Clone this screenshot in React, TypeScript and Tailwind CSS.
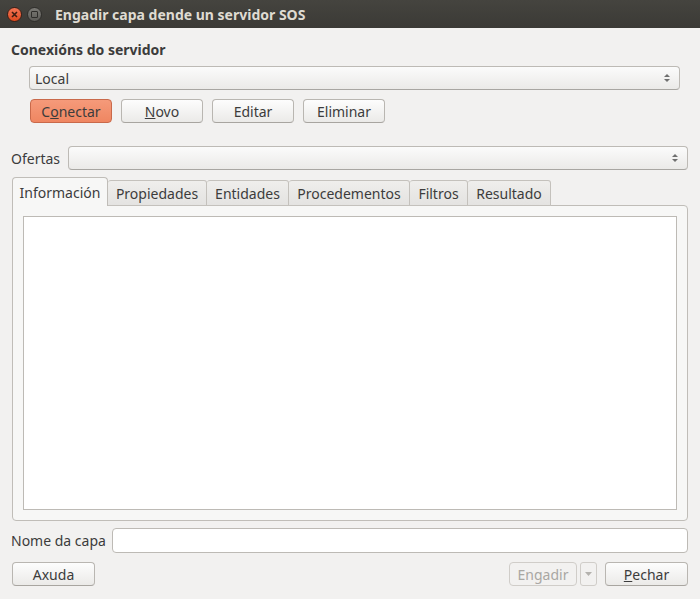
import React from "react";

const font = { fontFamily: '"Noto Sans", "Open Sans", sans-serif' };

function Spin() {
  return (
    <svg width="8" height="12" viewBox="0 0 8 12" className="shrink-0">
      <path d="M4 2 L7 5 L1 5 Z" fill="#6f6f6f" />
      <path d="M1 7 L7 7 L4 10 Z" fill="#6f6f6f" />
    </svg>
  );
}

function Combo({ text, className = "" }: { text?: string; className?: string }) {
  return (
    <div
      className={`h-6 flex items-center justify-between pl-[5px] pr-[8px] rounded-[4px] border border-[#bdbab5] border-b-[#a8a6a2] bg-gradient-to-b from-[#fbfbfb] to-[#ebeae8] text-[#3c3c3c] ${className}`}
    >
      <span>{text}</span>
      <Spin />
    </div>
  );
}

function Btn({
  children,
  className = "w-[82px]",
  tone = "normal",
}: {
  children: React.ReactNode;
  className?: string;
  tone?: "normal" | "accent" | "disabled";
}) {
  const look =
    tone === "accent"
      ? "border-[#c9694a] bg-gradient-to-b from-[#f59a7a] to-[#ef8661] text-[#3c3c3c]"
      : tone === "disabled"
        ? "border-[#d0cdc9] bg-[#f2f1f0] text-[#a9a7a3]"
        : "border-[#b9b6b1] border-b-[#a8a5a0] bg-gradient-to-b from-[#fdfdfd] to-[#ebeae8] text-[#3c3c3c]";
  return (
    <div
      className={`h-6 flex items-center justify-center rounded-[4px] border ${look} ${className}`}
    >
      {children}
    </div>
  );
}

const tabs: [string, string][] = [
  ["Propiedades", "w-[99px]"],
  ["Entidades", "w-[82px]"],
  ["Procedementos", "w-[121px]"],
  ["Filtros", "w-[58px]"],
  ["Resultado", "w-[83px]"],
];

export default function App() {
  return (
    <div
      className="w-[700px] h-[599px] bg-[#f2f1f0] text-[14px] text-[#3c3c3c] flex flex-col overflow-hidden"
      style={font}
    >
      {/* barra de título */}
      <div className="h-[28px] shrink-0 flex items-center bg-gradient-to-b from-[#45443f] to-[#3b3a36] pl-[7px]">
        <div className="w-[15px] h-[15px] rounded-full bg-gradient-to-b from-[#f37453] to-[#df4a1c] border border-[#3b1f17] flex items-center justify-center">
          <svg width="7" height="7" viewBox="0 0 7 7">
            <path d="M1 1 L6 6 M6 1 L1 6" stroke="#3d1d12" strokeWidth="1.6" />
          </svg>
        </div>
        <div className="ml-[5px] w-[15px] h-[15px] rounded-full bg-gradient-to-b from-[#7b7a75] to-[#5c5b57] border border-[#2f2e2b] flex items-center justify-center">
          <div className="w-[7px] h-[7px] border-[1.5px] border-[#2f2e2b] rounded-[1px]" />
        </div>
        <div className="ml-[13px] text-[#dfdbd2] font-bold text-[14px]">
          Engadir capa dende un servidor SOS
        </div>
      </div>

      <div className="flex-1 flex flex-col pl-[11px] pr-[12px] pt-[12px]">
        <div className="font-bold leading-[20px]">Conexións do servidor</div>
        <div className="pl-[18px] pr-[8px] mt-[6px]">
          <Combo text="Local" />
          <div className="flex gap-[9px] mt-[9px] pl-[1px]">
            <Btn tone="accent">
              C<span className="underline">o</span>nectar
            </Btn>
            <Btn>
              <span className="underline">N</span>ovo
            </Btn>
            <Btn>Editar</Btn>
            <Btn>Eliminar</Btn>
          </div>
        </div>

        <div className="flex items-center mt-[23px] gap-[8px]">
          <span>Ofertas</span>
          <Combo className="flex-1" />
        </div>

        {/* pestanas */}
        <div className="mt-[7px] ml-[1px] flex items-end h-[29px] relative z-10">
          <div className="h-[29px] w-[96px] flex items-center justify-center rounded-t-[4px] border border-b-0 border-[#c0bdb8] bg-[#f7f7f6] text-[#3c3c3c]">
            Información
          </div>
          {tabs.map(([t, w]) => (
            <div
              key={t}
              className={`h-[26px] ${w} flex items-center justify-center rounded-t-[3px] border border-l-0 border-[#c4c1bc] bg-gradient-to-b from-[#efeeec] to-[#e4e3e1]`}
            >
              {t}
            </div>
          ))}
        </div>
        <div className="ml-[1px] -mt-[1px] h-[316px] rounded-b-[4px] rounded-tr-[4px] border border-[#c0bdb8] bg-[#f7f7f6] p-[10px]">
          <div className="h-full border border-[#bdbab5] bg-white" />
        </div>

        <div className="flex items-center mt-[7px] gap-[6px]">
          <span>Nome da capa</span>
          <div className="flex-1 h-[25px] rounded-[4px] border border-[#bdbab5] bg-white" />
        </div>

        <div className="flex items-center mt-[9px] pl-[1px]">
          <Btn className="w-[83px]">Axuda</Btn>
          <div className="flex-1" />
          <Btn tone="disabled" className="w-[68px]">
            Engadir
          </Btn>
          <div className="ml-[3px] w-[17px] h-6 rounded-[3px] border border-[#d0cdc9] flex items-center justify-center">
            <svg width="7" height="4" viewBox="0 0 7 4">
              <path d="M0 0 L7 0 L3.5 4 Z" fill="#b4b2ae" />
            </svg>
          </div>
          <Btn className="ml-[8px] w-[83px]">
            <span className="underline">P</span>echar
          </Btn>
        </div>
      </div>
    </div>
  );
}
